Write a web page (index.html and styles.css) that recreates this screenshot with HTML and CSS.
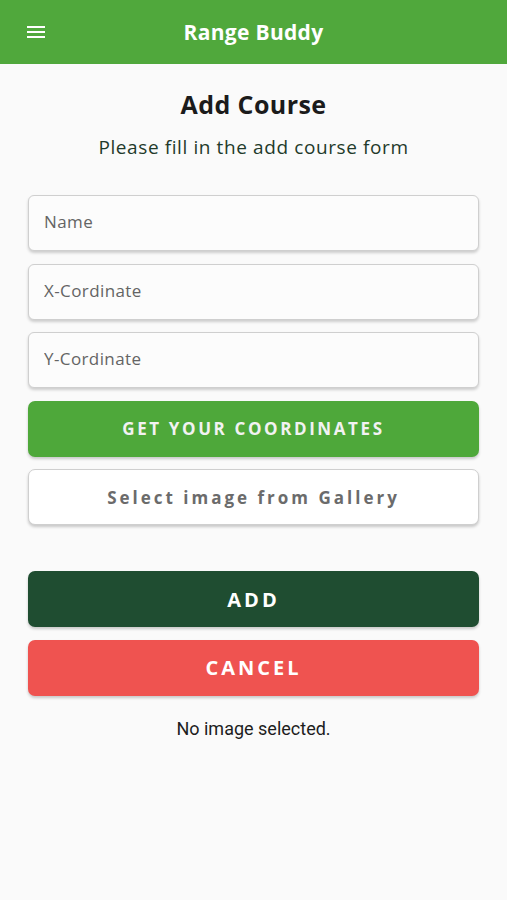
FILE: index.html
```html
<!DOCTYPE html>
<html lang="en">
<head>
  <meta charset="UTF-8">
  <meta name="viewport" content="width=device-width, initial-scale=1.0">
  <title>Range Buddy - Add Course</title>
  <link rel="stylesheet" href="styles.css">
</head>
<body>
  <header class="appbar">
    <button class="menu-btn" aria-label="Menu">
      <svg width="24" height="24" viewBox="0 0 24 24"><path d="M3 18h18v-2H3v2zm0-5h18v-2H3v2zm0-7v2h18V6H3z" fill="#fff"/></svg>
    </button>
    <h1 class="appbar-title">Range Buddy</h1>
  </header>

  <main class="container">
    <h2 class="page-title">Add Course</h2>
    <p class="subtitle">Please fill in the add course form</p>

    <div class="form">
      <input type="text" class="field" placeholder="Name">
      <input type="text" class="field" placeholder="X-Cordinate">
      <input type="text" class="field" placeholder="Y-Cordinate">

      <button class="btn btn-green">GET YOUR COORDINATES</button>
      <button class="btn btn-white">Select image from Gallery</button>

      <button class="btn btn-big btn-dark spaced">ADD</button>
      <button class="btn btn-big btn-red">CANCEL</button>
    </div>

    <p class="status">No image selected.</p>
  </main>
</body>
</html>
```

FILE: styles.css
```css
* {
  box-sizing: border-box;
  font-family: 'Open Sans', Roboto, sans-serif;
}

body {
  margin: 0;
  padding: 0;
  background: #fafafa;
  min-height: 100vh;
}

.appbar {
  height: 64px;
  background: #50a83c;
  display: flex;
  align-items: center;
  justify-content: center;
  position: relative;
}

.menu-btn {
  position: absolute;
  left: 24px;
  top: 20px;
  background: none;
  border: none;
  padding: 0;
  width: 24px;
  height: 24px;
}

.appbar-title {
  margin: 0;
  color: #fff;
  font-size: 21px;
  font-weight: 700;
  letter-spacing: 0.3px;
}

.container {
  padding: 0 28px;
}

.page-title {
  margin: 24px 0 0;
  text-align: center;
  font-size: 25px;
  font-weight: 700;
  color: #1b1b1b;
  line-height: 32px;
  letter-spacing: 0.4px;
}

.subtitle {
  margin: 15px 0 0;
  text-align: center;
  font-size: 19px;
  color: #1f3a2b;
  line-height: 24px;
  letter-spacing: 0.6px;
}

.form {
  margin-top: 36px;
  display: flex;
  flex-direction: column;
  gap: 12.5px;
}

.field {
  height: 56px;
  width: 100%;
  padding: 0 15px 3px;
  border: 1px solid #cfcfcf;
  border-radius: 6px;
  background: #fcfcfc;
  font-size: 17px;
  font-weight: 500;
  letter-spacing: 0.4px;
  color: #333;
  box-shadow: 0 2px 3px rgba(0, 0, 0, 0.18);
}

.field::placeholder {
  color: #646464;
}

.btn {
  height: 56px;
  width: 100%;
  border: none;
  border-radius: 7px;
  font-size: 17px;
  font-weight: 700;
  letter-spacing: 2.6px;
  box-shadow: 0 2px 3px rgba(0, 0, 0, 0.2);
  cursor: pointer;
}

.btn-green {
  background: #4ea83a;
  color: #f2f2f2;
}

.btn-white {
  background: #fff;
  color: #6b6b6b;
  border: 1px solid #cfcfcf;
  letter-spacing: 3px;
}

.btn-big {
  font-size: 20px;
  letter-spacing: 3px;
}

.btn-dark {
  background: #1f4d31;
  color: #fff;
}

.btn-red {
  background: #ef5350;
  color: #fff;
}

.spaced {
  margin-top: 33.5px;
}

.status {
  margin: 22px 0 0;
  text-align: center;
  font-family: Roboto, sans-serif;
  font-size: 18px;
  color: #1d1d1d;
}
```
